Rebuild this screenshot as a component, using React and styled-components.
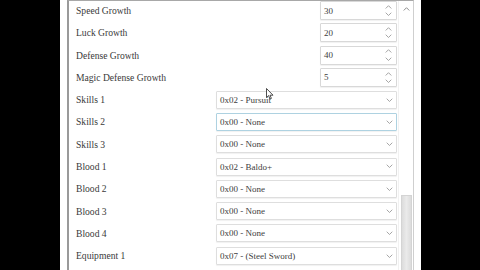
import React from "react";
import styled, { createGlobalStyle, css } from "styled-components";

const Global = createGlobalStyle`
  html, body { margin: 0; padding: 0; background: #000; overflow: hidden; }
  #root { width: 480px; height: 270px; }
`;

const Screen = styled.div`
  display: flex;
  width: 480px;
  height: 270px;
  background: #000;
`;

const Letterbox = styled.div`
  flex: 0 0 ${(p) => p.$w}px;
  background: #000;
`;

const Frame = styled.div`
  flex: 0 0 347px;
  background: #fff;
  padding: 0 7px;
  display: flex;
`;

const Panel = styled.div`
  position: relative;
  flex: 1;
  display: grid;
  grid-template-columns: 1fr 15px;
  border-left: 2px solid #9a9a9a;
  border-top: 1px solid #a8a8a8;
  border-right: 1px solid #cfcfcf;
  overflow: hidden;
  height: 269px;
`;

const List = styled.div`
  margin-top: -1.65px;
  padding-left: 7px;
`;

const Row = styled.div`
  display: grid;
  grid-template-columns: 140px 181px;
  align-items: center;
  height: 22.3px;
`;

const Label = styled.span`
  font-family: "Liberation Serif", "DejaVu Serif", serif;
  font-size: 9.6px;
  color: #3a3a3a;
  white-space: nowrap;
`;

const Box = styled.div`
  display: flex;
  align-items: center;
  justify-content: space-between;
  box-sizing: border-box;
  background: #fff;
  border: 1px solid #dedede;
  border-radius: 1px;
  box-shadow: 0 1px 1px rgba(0, 0, 0, 0.06);
  font-family: "Liberation Serif", "DejaVu Serif", serif;
  font-size: 9px;
  color: #404040;
  white-space: nowrap;
`;

const Select = styled(Box)`
  height: 18px;
  padding: 0 3px 0 3px;
  ${(p) =>
    p.$focused &&
    css`
      border-color: #aed2e1;
    `}
`;

const NumberBox = styled(Box)`
  justify-self: end;
  width: 77px;
  height: 19px;
  padding: 0 4px 0 3px;
  border-color: #d8d8d8;
`;

const Spinner = styled.div`
  display: flex;
  flex-direction: column;
  align-items: center;
  gap: 3px;
`;

const Chevron = ({ up, size = 7, color = "#939393" }) => (
  <svg width={size} height={size * 0.6} viewBox="0 0 10 6" fill="none">
    <path
      d={up ? "M1 5 L5 1 L9 5" : "M1 1 L5 5 L9 1"}
      stroke={color}
      strokeWidth="1.2"
    />
  </svg>
);

const ScrollBar = styled.div`
  position: relative;
  border-left: 1px solid #f1f1f1;
  display: flex;
  flex-direction: column;
  align-items: center;
  padding-top: 6px;
`;

const Thumb = styled.div`
  position: absolute;
  left: 2px;
  top: 194px;
  width: 11px;
  bottom: -4px;
  background: linear-gradient(90deg, #dcdcdc, #eaeaea 50%, #dcdcdc);
  border: 1px solid #d4d4d4;
  box-sizing: border-box;
`;

const Cursor = styled.svg`
  position: absolute;
  left: 197px;
  top: 87px;
`;

const numbers = [
  ["Speed Growth", "30"],
  ["Luck Growth", "20"],
  ["Defense Growth", "40"],
  ["Magic Defense Growth", "5"],
];

const selects = [
  ["Skills 1", "0x02 - Pursuit"],
  ["Skills 2", "0x00 - None", true],
  ["Skills 3", "0x00 - None"],
  ["Blood 1", "0x02 - Baldo+"],
  ["Blood 2", "0x00 - None"],
  ["Blood 3", "0x00 - None"],
  ["Blood 4", "0x00 - None"],
  ["Equipment 1", "0x07 - (Steel Sword)"],
];

export default function App() {
  return (
    <>
      <Global />
      <Screen>
        <Letterbox $w={60} />
        <Frame>
          <Panel>
            <List>
              {numbers.map(([label, value]) => (
                <Row key={label}>
                  <Label>{label}</Label>
                  <NumberBox>
                    <span>{value}</span>
                    <Spinner>
                      <Chevron up size={7} />
                      <Chevron size={7} />
                    </Spinner>
                  </NumberBox>
                </Row>
              ))}
              {selects.map(([label, value, focused]) => (
                <Row key={label}>
                  <Label>{label}</Label>
                  <Select $focused={focused}>
                    <span>{value}</span>
                    <Chevron size={7} />
                  </Select>
                </Row>
              ))}
            </List>
            <ScrollBar>
              <Chevron up size={7} color="#7a7a7a" />
              <Thumb />
            </ScrollBar>
            <Cursor width="8" height="12" viewBox="0 0 8 12">
              <path
                d="M0.5 0.5 L0.5 9.5 L2.6 7.6 L4 11 L5.4 10.4 L4 7.2 L7 7.2 Z"
                fill="#fff"
                stroke="#222"
                strokeWidth="0.8"
              />
            </Cursor>
          </Panel>
        </Frame>
        <Letterbox $w={59} />
      </Screen>
    </>
  );
}
